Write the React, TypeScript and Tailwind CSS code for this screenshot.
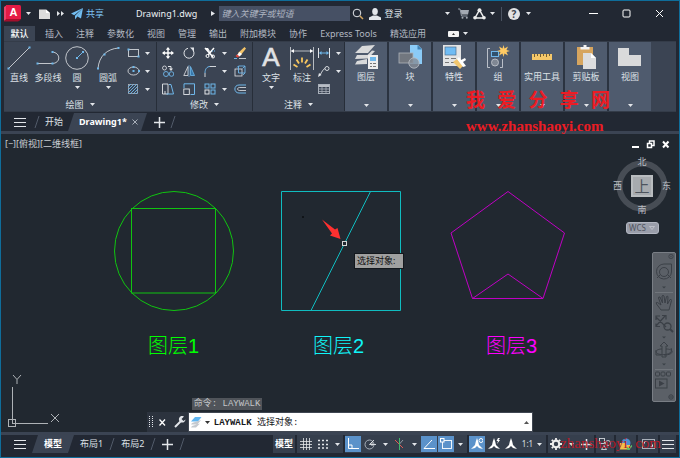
import type { ReactNode } from "react";

const BLUE = "#6fb7ea";
const LIGHT = "#e3e6ea";
const GREY = "#a9b0ba";

const TABS = ["插入", "注释", "参数化", "视图", "管理", "输出", "附加模块", "协作", "Express Tools", "精选应用"];

type DrawingProps = { w: number; h: number; children: ReactNode; className?: string };

function Drawing({ w, h, children, className = "" }: DrawingProps) {
  return (
    <svg width={w} height={h} viewBox={`0 0 ${w} ${h}`} fill="none" aria-hidden="true" className={`shrink-0 ${className}`}>
      {children}
    </svg>
  );
}

function Caret({ className = "" }: { className?: string }) {
  return (
    <Drawing w={5} h={3} className={className}>
      <path d="M0 0h5L2.500 3z" fill={LIGHT} />
    </Drawing>
  );
}

function Dots({ points }: { points: number[][] }) {
  return (
    <>
      {points.map(([x, y]) => (
        <rect key={`${x}-${y}`} x={x - 1} y={y - 1} width="2" height="2" fill={BLUE} />
      ))}
    </>
  );
}

function BigTool({ label, icon, caret, className }: { label: string; icon: ReactNode; caret?: boolean; className: string }) {
  return (
    <button type="button" className={`flex shrink-0 flex-col items-center ${className}`}>
      <span className="flex h-6 items-center">{icon}</span>
      <span className="h-4 text-[9px] leading-4 whitespace-nowrap">{label}</span>
      {caret && <Caret />}
    </button>
  );
}

function SmallTool({ label, className, children }: { label: string; className: string; children: ReactNode }) {
  return (
    <button type="button" aria-label={label} className={`flex h-[18px] items-center justify-center ${className}`}>
      {children}
    </button>
  );
}

function Panel({ title, className, children }: { title: string; className: string; children: ReactNode }) {
  return (
    <section className={`flex shrink-0 flex-col border-r border-[#272e39] ${className}`}>
      <div className="flex flex-1 items-start pt-[2px]">{children}</div>
      <button type="button" className="flex h-[13px] items-center justify-center gap-[6px] text-[9px] leading-3">
        {title}
        <Caret />
      </button>
    </section>
  );
}

const DRAW_TOOLS = [
  {
    label: "直线",
    className: "w-[30px]",
    caret: false,
    icon: (
      <Drawing w={24} h={24}>
        <path d="M1.500 22.500 22.500 1.500" stroke={LIGHT} strokeWidth="0.8" />
        <Dots points={[[1.5, 22.5], [22.5, 1.5]]} />
      </Drawing>
    ),
  },
  {
    label: "多段线",
    className: "w-[28px]",
    caret: false,
    icon: (
      <Drawing w={24} h={24}>
        <path d="M1 17.500h15c9 0 9-11 0-11.500" stroke={LIGHT} strokeWidth="0.8" />
        <Dots points={[[1.5, 17.5], [16.5, 17.5], [16.5, 6]]} />
      </Drawing>
    ),
  },
  {
    label: "圆",
    className: "w-[30px]",
    caret: true,
    icon: (
      <Drawing w={24} h={24}>
        <circle cx="12" cy="12" r="11.3" stroke={LIGHT} strokeWidth="0.8" />
        <path d="m12 12 6-6" stroke={BLUE} />
        <Dots points={[[12, 12], [18, 6]]} />
      </Drawing>
    ),
  },
  {
    label: "圆弧",
    className: "w-[32px]",
    caret: true,
    icon: (
      <Drawing w={24} h={24}>
        <path d="M2 22.500C3 10 11 3 22.500 2" stroke={LIGHT} strokeWidth="0.8" />
        <Dots points={[[2, 22.5], [8.5, 8.5], [22.5, 2]]} />
      </Drawing>
    ),
  },
];

const DRAW_SMALL = [
  {
    label: "矩形",
    icon: (
      <Drawing w={13} h={12}>
        <rect x="1.500" y="2.500" width="10" height="7" stroke={LIGHT} strokeWidth="0.8" />
        <Dots points={[[1.5, 2.5], [11.5, 9.5]]} />
      </Drawing>
    ),
  },
  {
    label: "椭圆",
    icon: (
      <Drawing w={13} h={12}>
        <ellipse cx="6.500" cy="6" rx="5.500" ry="4" stroke={LIGHT} strokeWidth="0.8" />
        <Dots points={[[6.5, 6], [12, 6], [6.5, 2]]} />
      </Drawing>
    ),
  },
  {
    label: "图案填充",
    icon: (
      <Drawing w={13} h={12}>
        <rect x="1.500" y="1.500" width="9" height="9" stroke={GREY} strokeWidth="0.8" />
        <path d="M1 4l3-3M1 7l6-6M1 10l9-9M3 11l8-8M6 11l5-5M9 11l2-2" stroke={BLUE} strokeWidth="0.9" />
      </Drawing>
    ),
  },
];

const MODIFY_ROWS = [
  [
    {
      label: "移动",
      icon: (
        <Drawing w={12} h={12}>
          <path d="M6 2v8M2 6h8" stroke="#fff" strokeWidth="1.4" />
          <path d="m6 0 2.200 2.800H3.800zM6 12l2.200-2.800H3.800zM0 6l2.800-2.200v4.400zM12 6 9.200 3.800v4.400z" fill="#fff" />
        </Drawing>
      ),
    },
    {
      label: "旋转",
      icon: (
        <Drawing w={12} h={12}>
          <path d="M10 3.200a5 5 0 1 1-5-1.900" stroke={LIGHT} />
          <path d="M7 .5h4v4z" fill={LIGHT} />
        </Drawing>
      ),
    },
    {
      label: "修剪",
      icon: (
        <Drawing w={12} h={12}>
          <path d="m1 1 8 9M10 1 4 8" stroke="#fff" strokeWidth="1.500" />
          <path d="M1 1h3l3 5z" fill="#fff" />
          <circle cx="3.500" cy="9" r="1.500" stroke="#fff" />
          <circle cx="9" cy="9.500" r="1.500" stroke="#fff" />
          <path d="M8 4h4" stroke={BLUE} strokeDasharray="1 1" />
        </Drawing>
      ),
    },
  ],
  [
    {
      label: "复制",
      icon: (
        <Drawing w={12} h={12}>
          <circle cx="2.500" cy="3" r="2" stroke={LIGHT} strokeWidth="0.8" />
          <circle cx="4" cy="9" r="2.500" stroke={BLUE} strokeWidth="0.9" />
          <circle cx="9.500" cy="9" r="2.300" stroke={BLUE} strokeWidth="0.9" />
          <path d="M6 1.500h3V4" stroke={LIGHT} />
          <path d="M7 3.500h4L9 6z" fill={LIGHT} />
        </Drawing>
      ),
    },
    {
      label: "镜像",
      icon: (
        <Drawing w={12} h={12}>
          <path d="M5 1.500v9H.800z" stroke={LIGHT} strokeWidth="0.8" />
          <path d="M7.500 1.500v9h4z" fill="#3878ab" stroke={BLUE} strokeWidth="0.8" />
          <path d="M6 0v12" stroke={BLUE} strokeWidth="0.6" />
        </Drawing>
      ),
    },
    {
      label: "圆角",
      icon: (
        <Drawing w={12} h={12}>
          <path d="M1 12V8M6 1.500h6" stroke={LIGHT} strokeWidth="0.9" />
          <path d="M1 8c0-4 2-6.500 5-6.500" stroke={BLUE} />
        </Drawing>
      ),
    },
  ],
  [
    {
      label: "拉伸",
      icon: (
        <Drawing w={12} h={12}>
          <path d="M6 11H.500V1h5.500v10M3 11V8" stroke={LIGHT} strokeWidth="0.9" />
          <path d="M7 1.500h2L11.500 11H4.500" stroke={BLUE} />
        </Drawing>
      ),
    },
    {
      label: "缩放",
      icon: (
        <Drawing w={12} h={12}>
          <path d="M1 5V.800h10.500V11.500H7.500" stroke={BLUE} />
          <rect x=".800" y="6" width="5.500" height="5.500" stroke={LIGHT} strokeWidth="0.9" />
        </Drawing>
      ),
    },
    {
      label: "阵列",
      icon: (
        <Drawing w={12} h={12}>
          <rect x="1" y="1" width="4" height="4" stroke={BLUE} />
          <rect x="7" y="1" width="4" height="4" stroke={BLUE} />
          <rect x="1" y="7" width="4" height="4" stroke={LIGHT} />
          <rect x="7" y="7" width="4" height="4" stroke={BLUE} />
        </Drawing>
      ),
    },
  ],
];

const MODIFY_EXTRA = [
  {
    label: "删除",
    icon: (
      <Drawing w={12} h={12}>
        <path d="M10.500 0 12 1.500 6.500 8.500 4 6z" fill="#f3c368" />
        <path d="M5.500 5 8 7 5.500 9.500 3 8z" fill="#fff" />
        <path d="M3 7.500 5.500 9.500 3.500 10.500 1.500 9z" fill="#e5473c" />
        <path d="M0 11.500h3" stroke={BLUE} />
        <path d="M5 11.500h7" stroke={LIGHT} strokeWidth="0.8" />
      </Drawing>
    ),
  },
  {
    label: "分解",
    icon: (
      <Drawing w={12} h={12}>
        <rect x="1" y="4" width="7" height="7" stroke={LIGHT} strokeWidth="0.8" />
        <path d="M3 2.500 4.500 1H11v7l-2 2M11 1 8.500 3.500M4.500 1v7H11" stroke={BLUE} strokeWidth="0.9" />
      </Drawing>
    ),
  },
  {
    label: "偏移",
    icon: (
      <Drawing w={12} h={12}>
        <path d="M12 2H5C-.500 2-.500 10 5 10h7" stroke={BLUE} />
        <path d="M12 4.500H5.500c-2.500 0-2.500 3 0 3H12" stroke={LIGHT} strokeWidth="0.8" />
      </Drawing>
    ),
  },
];

const CARDS = [
  {
    label: "图层",
    icon: (
      <Drawing w={24} h={24}>
        <path d="m8 1 13-1-7 8H1zM3 10l-2 4 13-.500L21 6l-3-.500L13.500 10zM3 16l-2 3.500 12-.500V14z" fill="#d9dadb" />
        <rect x="14" y="10" width="10" height="14" fill="#ededed" />
        <rect x="16" y="12" width="6" height="4" fill={BLUE} />
        <path d="M16 18.500h2M19 18.500h3M16 21.500h2M19 21.500h3" stroke="#777" />
      </Drawing>
    ),
  },
  {
    label: "块",
    icon: (
      <Drawing w={24} h={24}>
        <path d="M12 0h8l4 4v15H12z" fill="#8bcbf7" />
        <path d="M19.500 0v4.500H24z" fill="#3f81b5" />
        <rect x="1" y="8" width="14" height="10" fill="#72777f" stroke="#aeb3ba" strokeWidth="0.8" />
        <circle cx="16" cy="18" r="5.200" fill="#858c96" fillOpacity="0.8" stroke="#b9bec5" strokeWidth="0.8" />
      </Drawing>
    ),
  },
  {
    label: "特性",
    icon: (
      <Drawing w={24} h={24}>
        <rect x="1" y="0" width="18" height="21" fill="#e3e4e5" />
        <rect x="3" y="2" width="11" height="8" fill="#70bcf4" stroke="#4d6f8f" strokeWidth="0.7" />
        <path d="M3 13.500h4M9 13.500h5M3 17.500h4M9 17.500h5" stroke="#777" />
        <path d="m11 17 4-3 6 7-3 3z" fill="#f2c66e" />
        <path d="m15 14 2-2 2 3 4-2 1 2-3 2 3 4-3 1z" fill="#fff" />
      </Drawing>
    ),
  },
  {
    label: "组",
    icon: (
      <Drawing w={24} h={24}>
        <path d="M4 3.500H1.500V22.500H4M14 22.500h2.500V14" stroke="#c6cbd2" strokeWidth="0.9" />
        <rect x="5.500" y="6.500" width="7" height="5" fill="#31516c" stroke={BLUE} />
        <circle cx="9" cy="17.500" r="3.500" fill="#7f8793" stroke="#b7bcc4" />
        <path d="m17.500 0 1 3.500L22 1.500l-1.500 3.500 3.500 1-3.500 1L22 10.500l-3.500-2-1 3.500-1-3.500-3.500 2 1.500-3.500L11 6l3.500-1L13 1.500l3.500 2z" fill="#ffcb64" />
      </Drawing>
    ),
  },
  {
    label: "实用工具",
    icon: (
      <Drawing w={24} h={24}>
        <rect x="2" y="9" width="20" height="6" fill="#f6c869" />
        <path d="M4.500 9v3M7.500 9v2M10.500 9v3M13.500 9v2M16.500 9v3M19.500 9v2" stroke="#715d35" />
      </Drawing>
    ),
  },
  {
    label: "剪贴板",
    icon: (
      <Drawing w={24} h={24}>
        <rect x="3" y="2" width="16" height="18" fill="#d6a55f" />
        <path d="M6.500 4.500V2h3V0h3v2h3v2.500z" fill="#f3f3f3" />
        <path d="M9 8h8l5 5v11H9z" fill="#dcdddf" />
        <path d="M17 8v5h5z" fill="#fff" />
      </Drawing>
    ),
  },
  {
    label: "视图",
    icon: (
      <Drawing w={24} h={24}>
        <path d="M0 3h11v7h12v11H0z" fill="#d9dadb" />
      </Drawing>
    ),
  },
];

function TitleBar() {
  return (
    <header className="flex h-[25px] items-center">
      <button type="button" aria-label="应用程序菜单" className="ml-[3px] flex items-center gap-[5px]">
        <Drawing w={17} h={17}>
          <path d="M0 2 3 0v14l-3 2z" fill="#e8436a" />
          <path d="M0 16l3-2.500h13.500V15L14 16.500H0z" fill="#a30f2c" />
          <path d="M2 0h13.500Q17 0 17 1.500V14H2z" fill="#e51b45" />
          <text x="9.500" y="11" textAnchor="middle" fill="#fff" className="font-['Liberation_Sans',sans-serif] text-[11px] font-bold">A</text>
        </Drawing>
        <Caret />
      </button>
      <button type="button" aria-label="新建" className="ml-[7px]">
        <Drawing w={13} h={12}>
          <path d="M1 1.500h7l4 3.500v6H1z" fill="#dcdcdc" />
          <path d="M8 1.500V5h4z" fill="#fff" />
        </Drawing>
      </button>
      <button type="button" aria-label="更多" className="ml-[6px]">
        <Drawing w={7} h={5}>
          <path d="M0 0l3 2.500L0 5zM4 0l3 2.500L4 5z" fill={LIGHT} />
        </Drawing>
      </button>
      <button type="button" className="ml-[7px] flex items-center gap-[3px] text-[9px] text-[#7ec4f5]">
        <Drawing w={12} h={12}>
          <path d="M12 0 0 5.500 3.200 7.200zM12 0 4 7.700V11.500L6 9zM12 0 6.500 8.500 10 10.500z" fill="#72bdf1" />
        </Drawing>
        共享
      </button>
      <span className="ml-8 text-[9px] leading-3 whitespace-nowrap text-[#edf0f3]">Drawing1.dwg</span>
      <Drawing w={4} h={5} className="ml-[14px]">
        <path d="M0 0l4 2.500L0 5z" fill={LIGHT} />
      </Drawing>
      <input
        type="search"
        aria-label="搜索"
        placeholder="键入关键字或短语"
        className="ml-1 h-[15px] w-[131px] min-w-0 bg-[#465064] px-[2px] text-[9px] italic placeholder:text-[#aeb5c1] placeholder:opacity-100"
      />
      <button type="button" aria-label="查找" className="ml-[2px]">
        <Drawing w={12} h={12}>
          <circle cx="5" cy="5" r="3.800" stroke={LIGHT} />
          <path d="m8 8 3 3" stroke="#d4a65f" strokeWidth="1.500" />
        </Drawing>
      </button>
      <button type="button" className="ml-[5px] flex items-center gap-[3px] text-[9px] whitespace-nowrap">
        <Drawing w={12} h={12}>
          <ellipse cx="6" cy="3.500" rx="2.800" ry="3.500" fill={LIGHT} />
          <path d="M0 12V9.500L4 7.500h4l4 2V12z" fill={LIGHT} />
        </Drawing>
        登录
      </button>
      <div className="mr-[46px] ml-auto flex shrink-0 items-center">
        <Caret />
        <button type="button" aria-label="应用商店" className="ml-2">
          <Drawing w={11} h={11}>
            <path d="M0 1h2l1.500 7h6" stroke="#929aa6" />
            <path d="M2.500 2H11L10 6.500H3.500z" fill="#a3a9b2" />
            <circle cx="4.500" cy="9.800" r="1" fill="#a3a9b2" />
            <circle cx="8.800" cy="9.800" r="1" fill="#a3a9b2" />
          </Drawing>
        </button>
        <button type="button" aria-label="Autodesk" className="ml-1 flex items-center gap-1">
          <Drawing w={13} h={12}>
            <path d="M6.500 2 2 10h9z" stroke="#eee" strokeWidth="1.500" />
            <circle cx="6.500" cy="2.200" r="2" fill="#eee" />
            <circle cx="2" cy="9.800" r="1.800" fill="#eee" />
            <circle cx="11" cy="9.800" r="1.800" fill="#eee" />
          </Drawing>
          <Caret />
        </button>
        <span className="ml-[6px] h-[14px] w-px bg-[#4a5260]" />
        <button type="button" aria-label="帮助" className="ml-[6px] flex items-center gap-[6px]">
          <span className="flex size-3 items-center justify-center rounded-full bg-[#e2e3e4] text-[10px] leading-3 font-bold text-[#3d444f]">?</span>
          <Caret />
        </button>
      </div>
      <div className="mr-[3px] flex shrink-0">
        <button type="button" aria-label="最小化" className="flex w-[33px] justify-center">
          <Drawing w={9} h={9}>
            <path d="M0 4.500h9" stroke="#fff" />
          </Drawing>
        </button>
        <button type="button" aria-label="最大化" className="flex w-[33px] justify-center">
          <Drawing w={9} h={9}>
            <rect x="1" y="1" width="7" height="7" rx="1" stroke="#fff" />
          </Drawing>
        </button>
        <button type="button" aria-label="关闭" className="flex w-[33px] justify-center">
          <Drawing w={9} h={9}>
            <path d="m1 1 7 7M8 1 1 8" stroke="#fff" />
          </Drawing>
        </button>
      </div>
    </header>
  );
}

function Ribbon() {
  return (
    <div className="mx-[3px] flex h-[71px] border-t border-b border-[#343c49] bg-[#3b4453]">
      <Panel title="绘图" className="w-[153px]">
        <div className="flex pt-[2px]">
          {DRAW_TOOLS.map((tool) => (
            <BigTool key={tool.label} {...tool} />
          ))}
        </div>
        <div>
          {DRAW_SMALL.map((tool) => (
            <div key={tool.label} className="flex items-center">
              <SmallTool label={tool.label} className="w-[18px]">{tool.icon}</SmallTool>
              <span className="flex w-[10px] justify-center"><Caret /></span>
            </div>
          ))}
        </div>
      </Panel>
      <Panel title="修改" className="w-[96px]">
        <div>
          {MODIFY_ROWS.map((row) => (
            <div key={row[0].label} className="flex items-center">
              {row.map((tool) => (
                <SmallTool key={tool.label} label={tool.label} className="w-[21px]">{tool.icon}</SmallTool>
              ))}
              <span className="flex w-2 justify-center"><Caret /></span>
            </div>
          ))}
        </div>
        <div>
          {MODIFY_EXTRA.map((tool) => (
            <SmallTool key={tool.label} label={tool.label} className="w-6">{tool.icon}</SmallTool>
          ))}
        </div>
      </Panel>
      <Panel title="注释" className="w-[92px]">
        <div className="flex pt-[2px]">
          <BigTool
            label="文字"
            caret
            className="w-9"
            icon={
              <Drawing w={22} h={24} className="overflow-visible">
                <text x="11" y="20" textAnchor="middle" fill="#e1e2e4" stroke="#e1e2e4" strokeWidth="0.6" className="font-['Liberation_Sans',sans-serif] text-[26px]">
                  A
                </text>
              </Drawing>
            }
          />
          <BigTool
            label="标注"
            className="w-[26px]"
            icon={
              <Drawing w={24} h={24}>
                <path d="M.500 1v23M23.500 1v23M1 5h22" stroke="#c4c8ce" strokeWidth="0.9" />
                <path d="m1 5 3-2v4zM23 5l-3-2v4z" fill="#fff" />
                <path d="M12 11.500v5M6.500 13.500l2.500 4M17.500 13.500l-2.500 4M3.500 18.500l4 2.500M20.500 18.500l-4 2.500" stroke="#f8c75f" strokeWidth="1.800" />
              </Drawing>
            }
          />
        </div>
        <div>
          <div className="flex items-center">
            <SmallTool label="线性" className="w-[18px]">
              <Drawing w={12} h={12}>
                <path d="M.500 1v10M11.500 1v10" stroke={LIGHT} />
                <path d="M2 6h8" stroke={BLUE} />
                <path d="m1 6 2.500-2v4zM11 6 8.500 4v4z" fill={BLUE} />
              </Drawing>
            </SmallTool>
            <span className="flex w-[10px] justify-center"><Caret /></span>
          </div>
          <div className="flex items-center">
            <SmallTool label="引线" className="w-[18px]">
              <Drawing w={12} h={12}>
                <path d="M2 10C4 7 5 4 7 3.500" stroke={LIGHT} strokeWidth="0.9" />
                <circle cx="9" cy="3.500" r="2" stroke={LIGHT} strokeWidth="0.9" />
                <path d="m0 12 1-4 2.500 2z" fill={LIGHT} />
              </Drawing>
            </SmallTool>
            <span className="flex w-[10px] justify-center"><Caret /></span>
          </div>
          <SmallTool label="表格" className="w-[18px]">
            <Drawing w={12} h={12}>
              <rect x=".500" y="1.500" width="11" height="9" stroke={GREY} />
              <path d="M1 3h10" stroke={LIGHT} strokeWidth="1.500" />
              <path d="M1 6h10M1 8.500h10M4 4v7M8 4v7" stroke={GREY} strokeWidth="0.8" />
            </Drawing>
          </SmallTool>
        </div>
      </Panel>
      <div className="flex min-w-0 gap-[2px] bg-[#2b3340]">
        {CARDS.map((card) => (
          <button key={card.label} type="button" className="flex w-[42px] flex-col items-center bg-[#4f5b6e] pt-[3px]">
            {card.icon}
            <span className="text-[9px] leading-4 whitespace-nowrap">{card.label}</span>
            <Caret className="mt-auto mb-1" />
          </button>
        ))}
      </div>
    </div>
  );
}

function Slash() {
  return (
    <Drawing w={6} h={12}>
      <path d="M1 12 5 0" stroke="#525b69" />
    </Drawing>
  );
}

function MenuIcon() {
  return (
    <Drawing w={12} h={11}>
      <path d="M0 1.500h12M0 5.500h12M0 9.500h12" stroke={LIGHT} strokeWidth="1.200" />
    </Drawing>
  );
}

function PlusIcon() {
  return (
    <Drawing w={11} h={11}>
      <path d="M5.500 0v11M0 5.500h11" stroke={LIGHT} strokeWidth="1.500" />
    </Drawing>
  );
}

function FileTabs() {
  return (
    <nav className="flex h-[19px] items-end pl-[13px] text-[9px]">
      <div className="flex h-[18px] items-center">
        <button type="button" aria-label="图形菜单"><MenuIcon /></button>
        <span className="ml-2"><Slash /></span>
        <button type="button" className="ml-[5px]">开始</button>
        <button
          type="button"
          className="ml-[5px] flex h-[18px] w-[79px] items-center gap-[5px] bg-[#3b4453] pl-[11px] font-bold text-white [clip-path:polygon(6px_0,100%_0,calc(100%-6px)_100%,0_100%)]"
        >
          Drawing1*
          <Drawing w={6} h={6}>
            <path d="m.500.500 5 5M5.500.500l-5 5" stroke={GREY} />
          </Drawing>
        </button>
        <button type="button" aria-label="新建图形" className="ml-[7px]"><PlusIcon /></button>
        <span className="ml-[5px]"><Slash /></span>
      </div>
    </nav>
  );
}

function ViewCube() {
  return (
    <div className="absolute top-[23px] right-2 flex flex-col items-center text-[9px] leading-[10px] text-[#b9bdc2]">
      <div className="flex size-[58px] flex-col items-center justify-between">
        <svg className="absolute top-0" width="58" height="58" viewBox="0 0 58 58" fill="none" aria-hidden="true">
          <circle cx="29" cy="29" r="22.500" stroke="#474d55" strokeWidth="6" />
        </svg>
        <span className="relative">北</span>
        <div className="relative flex w-full items-center justify-between">
          <span>西</span>
          <button type="button" className="size-[22px] border-2 border-[#b9bdc0] bg-[#a7abaf] text-[15px] leading-[17px] text-[#4d545d]">上</button>
          <span>东</span>
        </div>
        <span className="relative">南</span>
      </div>
      <button type="button" className="mt-[7px] flex h-3 w-[33px] items-center justify-center gap-[3px] rounded-[3px] border border-[#b3b7c2] bg-[#9a9eaa] text-[8px] text-[#50545f]">
        WCS
        <Drawing w={6} h={4}>
          <path d="M.500.500h5L3 3.500z" stroke="#c6c9d0" strokeWidth="0.8" />
        </Drawing>
      </button>
    </div>
  );
}

function NavigationBar() {
  return (
    <div className="absolute top-[118px] right-[3px] w-[24px] rounded-[2px] border border-[#797e85] bg-[#5b6067]">
      <svg width="22" height="148" viewBox="0 0 22 148" fill="none" stroke="#3b4047" aria-label="导航栏" role="img">
        <circle cx="18" cy="3.500" r="2.200" strokeWidth="0.8" />
        <path d="m17 2.500 2 2M19 2.500l-2 2" strokeWidth="0.6" />
        <path d="M11 11h7.500v8A7.500 7.500 0 1 1 11 11z" />
        <circle cx="11" cy="19" r="4.500" />
        <path d="m7 22-3 3M15 22l3 3" />
        <path d="M9 33.500h4L11 35.500z" fill="#3b4047" stroke="none" />
        <path d="M2 39.500h18M2 116.500h18" stroke="#70757b" />
        <path d="M8 57 3.500 51q-1-2 1-1.500L8 52 5.500 45q0-1.500 1.500-1L9.500 50 9 43q1-1.500 2 0l1 7 1.500-6.500q1.500-1 1.500.500L14.500 51l2.500-4.500q1.500-.500 1.500 1L16 57z" />
        <path d="M3 64 13 74M12 63 3 73M3 67v-4h4M9 62.500h4v4M3 70.500v3h4" strokeWidth="1.200" />
        <circle cx="14.500" cy="73.500" r="3.500" strokeWidth="1.300" />
        <path d="m17 76 3 3" strokeWidth="2" />
        <path d="M9 83.500h4L11 85.500z" fill="#3b4047" stroke="none" />
        <path d="M9 93v11h4V93h2l-4-4-4 4zM18 95c4 8-14 8-15 4 0-2 3-3 6-3M13 96c9 0 8 6-2 6M3 97v5h5" />
        <path d="M9 110.500h4L11 112.500z" fill="#3b4047" stroke="none" />
        <rect x="2.500" y="119" width="4" height="4" rx="1" />
        <rect x="8" y="119" width="4" height="4" rx="1" />
        <rect x="13.500" y="119" width="4" height="4" rx="1" />
        <rect x="2.500" y="126" width="11.500" height="9" />
        <path d="m6 127.500 5.500 3-5.500 3z" fill="#3b4047" stroke="none" />
        <circle cx="18" cy="144" r="2.200" />
        <path d="M16.500 144h3" />
      </svg>
    </div>
  );
}

const LAYERS = [
  { label: "图层1", className: "left-[147px] text-[#00ff00]" },
  { label: "图层2", className: "left-[312px] text-[#10f4f8]" },
  { label: "图层3", className: "left-[485px] text-[#ff00ff]" },
];

function Canvas() {
  return (
    <main className="relative min-h-[297px] flex-1 overflow-hidden border-t-[3px] border-[#3b4453] bg-[#212830]">
      {/* model space geometry */}
      <svg className="absolute top-0 left-0" width="600" height="200" viewBox="1 134 600 200" fill="none" aria-hidden="true">
        <g stroke="#10c410">
          <circle cx="174" cy="251" r="59.500" />
          <rect x="131.500" y="208.500" width="84" height="84.500" />
        </g>
        <path d="M281.500 191.500h119v119h-119zM370.500 191.500l-59.500 119" stroke="#10bcc0" />
        <path d="m508 191.500 56.500 41.500-21.500 65.500h-70.500L451 233zM472.500 298.500 508 274l35 24.500" stroke="#c000c4" />
        <path d="M302 217h2" stroke="#000" />
        <path d="m322 219.500 13 10 2.500-1.500 3 11-10.500-3.500 2-2z" fill="#ff3030" />
        <rect x="342.500" y="241.500" width="4" height="4" fill="#212830" stroke="#d6d6d6" />
      </svg>

      <div className="absolute top-1 left-1 flex text-[9px] leading-[11px] whitespace-nowrap text-[#c9cdd2]">
        <button type="button">[−]</button>
        <button type="button">[俯视]</button>
        <button type="button">[二维线框]</button>
      </div>

      <div className="absolute top-[119px] left-[353px] border border-[#14181d] bg-[#a0a0a0] pr-2 pl-[2px] text-[9px] leading-[14px] text-[#111]">
        选择对象:
      </div>

      {LAYERS.map((layer) => (
        <span
          key={layer.label}
          className={`absolute top-[200px] font-['Liberation_Sans','Noto_Sans_CJK_SC',sans-serif] text-[20px] leading-6 font-light ${layer.className}`}
        >
          {layer.label}
        </span>
      ))}

      <div className="absolute top-[6px] right-[9px] flex gap-[6px]">
        <button type="button" aria-label="最小化图形">
          <Drawing w={9} h={9}>
            <path d="M1 7h7" stroke="#fff" strokeWidth="2" />
          </Drawing>
        </button>
        <button type="button" aria-label="还原图形">
          <Drawing w={9} h={9}>
            <path d="M3.500 3V1h4.500v4.500H6M1.500 3.500h4v4h-4z" stroke="#fff" strokeWidth="1.500" />
          </Drawing>
        </button>
        <button type="button" aria-label="关闭图形">
          <Drawing w={9} h={9}>
            <path d="m2 1.500 5.500 6M7.500 1.500l-5.500 6" stroke="#fff" strokeWidth="2" />
          </Drawing>
        </button>
      </div>

      <ViewCube />
      <NavigationBar />

      {/* UCS icon */}
      <svg className="absolute bottom-[3px] left-[6px]" width="56" height="56" viewBox="0 0 56 56" fill="none" stroke="#aeb2b6" aria-hidden="true">
        <path d="M5.500 14v36M5 50.500h36" />
        <rect x="1.500" y="46.500" width="7" height="7" />
        <path d="m6 2 4 4.500L14 2M10 6.500V11M44 41l8 8M52 41l-8 8" />
      </svg>

      <div className="absolute inset-x-0 bottom-0 flex justify-center">
        <div className="w-[57%]">
          <div className="mb-[2px] ml-[45px] w-fit bg-[#50545a] px-[2px] font-['Liberation_Mono','Noto_Sans_CJK_SC',monospace] text-[9px] leading-3 whitespace-pre text-[#c3c6c9]">
            命令: LAYWALK
          </div>
          <div className="flex h-5 bg-[#2c333e]">
            <div className="flex w-[41px] items-center gap-[6px] pl-[2px]">
              <Drawing w={4} h={12}>
                <path d="M.500 0v12M3.500 0v12" stroke={LIGHT} strokeDasharray="1 1" />
              </Drawing>
              <button type="button" aria-label="关闭命令行">
                <Drawing w={7} h={7}>
                  <path d="m.500.500 5.500 6M6 .500l-5.500 6" stroke="#fff" strokeWidth="1.300" />
                </Drawing>
              </button>
              <button type="button" aria-label="自定义" className="ml-[2px]">
                <Drawing w={12} h={12}>
                  <path d="M1 11 7.500 4.500" stroke={LIGHT} strokeWidth="2" />
                  <path d="M10 .500A3.300 3.300 0 1 0 11.500 3.500L9.500 5 7.500 3z" fill={LIGHT} />
                </Drawing>
              </button>
            </div>
            <label className="flex min-w-0 flex-1 items-center border border-[#3f4651] bg-white pl-[2px] font-['Liberation_Mono','Noto_Sans_CJK_SC',monospace] text-[9px] whitespace-nowrap text-[#16181b]">
              <Drawing w={11} h={11}>
                <path d="M4 0h6.500L7 4.500H0z" fill="#60b6f2" />
                <path d="m1 6-1 1.500h6.500L10 3M1 9l-1 1.500h5L9 6.500" fill="#c4c9cf" />
              </Drawing>
              <Drawing w={5} h={3} className="ml-[3px]">
                <path d="M0 0h5L2.500 3z" fill="#333" />
              </Drawing>
              <span className="ml-[4px] pt-[2px] leading-3">
                <b>LAYWALK</b> 选择对象:
              </span>
              <input type="text" aria-label="命令" className="min-w-0 flex-1 outline-none" />
              <Drawing w={5} h={3} className="mr-[3px]">
                <path d="M0 3h5L2.500 0z" fill="#555" />
              </Drawing>
            </label>
          </div>
        </div>
      </div>
    </main>
  );
}

function StatusGroup({ className, children }: { className: string; children: ReactNode }) {
  return <div className={`flex h-[18px] items-center bg-[#363f4d] ${className}`}>{children}</div>;
}

function StatusButton({ label, on, className, children }: { label: string; on?: boolean; className: string; children: ReactNode }) {
  return (
    <button
      type="button"
      aria-label={label}
      className={`flex h-4 shrink-0 items-center justify-center ${on ? "bg-[#5b92ca]" : ""} ${className}`}
    >
      {children}
    </button>
  );
}

function Person() {
  return <path d="M6 0 7.200 3.500 8 7l4 4-4-1-2-2-2 2-4 1 4-4 .800-3.500z" fill="#fff" />;
}

function StatusBar() {
  return (
    <footer className="flex h-[25px] items-start border-t-[3px] border-[#3b4453] bg-[#222833] pl-[13px] text-[9px]">
      <nav className="flex h-[18px] shrink-0 items-center">
        <button type="button" aria-label="布局菜单"><MenuIcon /></button>
        <button
          type="button"
          className="ml-[6px] h-[18px] w-[42px] bg-[#3b4453] font-bold text-white [clip-path:polygon(6px_0,100%_0,calc(100%-6px)_100%,0_100%)]"
        >
          模型
        </button>
        <button type="button" className="ml-[6px]">布局1</button>
        <span className="ml-[6px]"><Slash /></span>
        <button type="button" className="ml-[6px]">布局2</button>
        <span className="ml-[6px]"><Slash /></span>
        <button type="button" aria-label="新建布局" className="ml-[6px]"><PlusIcon /></button>
        <span className="ml-[6px]"><Slash /></span>
      </nav>

      <div className="mr-[3px] ml-auto flex shrink-0 items-center gap-[2px]">
        <button type="button" className="h-[18px] w-[22px] bg-[#363f4d] font-bold whitespace-nowrap text-white">模型</button>
        <StatusGroup className="w-[46px]">
          <StatusButton label="栅格" className="w-[18px]">
            <Drawing w={12} h={12}>
              <path d="M3.500 0v12M6.500 0v12M9.500 0v12M0 3.500h12M0 6.500h12M0 9.500h12" stroke={LIGHT} strokeWidth="0.8" />
            </Drawing>
          </StatusButton>
          <StatusButton label="捕捉" className="w-4">
            <Drawing w={10} h={10}>
              <path d="M0 1.500h10M0 5.500h10M0 9h10" stroke={LIGHT} strokeWidth="1.500" strokeDasharray="2 2" />
            </Drawing>
          </StatusButton>
          <StatusButton label="捕捉设置" className="w-3"><Caret /></StatusButton>
        </StatusGroup>
        <StatusGroup className="w-[122px]">
          <StatusButton label="正交" on className="w-4">
            <Drawing w={12} h={12}>
              <path d="M1.500 0v10.500H12M1.500 7h3.500v3.500" stroke="#fff" />
            </Drawing>
          </StatusButton>
          <StatusButton label="极轴" className="w-[18px]">
            <Drawing w={12} h={12}>
              <circle cx="5.500" cy="6.500" r="4.500" stroke={GREY} />
              <path d="M5.500 6.500H12M5.500 6.500 10 2M8 4v4" stroke={LIGHT} strokeWidth="0.9" />
            </Drawing>
          </StatusButton>
          <StatusButton label="极轴设置" className="w-3"><Caret /></StatusButton>
          <StatusButton label="等轴测" className="w-4">
            <Drawing w={12} h={12}>
              <path d="M6.500 6 10 2" stroke={GREY} strokeWidth="0.8" />
              <path d="m2 2 8 8" stroke="#df5a55" />
              <path d="M6.500 0v12" stroke="#3fb86b" />
            </Drawing>
          </StatusButton>
          <StatusButton label="等轴测设置" className="w-[14px]"><Caret /></StatusButton>
          <StatusButton label="对象追踪" on className="w-4">
            <Drawing w={12} h={12}>
              <path d="M1 10.500 9 2M1 10.500h11" stroke="#fff" />
            </Drawing>
          </StatusButton>
          <StatusButton label="对象捕捉" on className="ml-px w-4">
            <Drawing w={12} h={12}>
              <rect x="2.500" y="2.500" width="9" height="8" stroke="#fff" strokeWidth="0.9" />
              <rect x=".500" y=".500" width="3.500" height="3.500" fill="#5b92ca" stroke="#fff" />
            </Drawing>
          </StatusButton>
          <StatusButton label="对象捕捉设置" className="w-3"><Caret /></StatusButton>
        </StatusGroup>
        <StatusGroup className="w-[77px]">
          <StatusButton label="注释可见性" on className="w-4">
            <Drawing w={12} h={12}>
              <Person />
              <circle cx="10" cy="2.500" r="2" fill="#5b92ca" stroke="#fff" />
            </Drawing>
          </StatusButton>
          <StatusButton label="自动缩放" className="w-[18px]">
            <Drawing w={12} h={12}>
              <Person />
              <path d="M10 0 8.500 3h1.500L9 6l3-4h-1.500L12 0z" fill="#fff" />
            </Drawing>
          </StatusButton>
          <StatusButton label="注释比例" className="w-4">
            <Drawing w={12} h={12}>
              <Person />
            </Drawing>
          </StatusButton>
          <button type="button" className="flex w-[26px] items-center justify-center gap-1 text-[8px] whitespace-nowrap">
            1:1
            <Caret />
          </button>
        </StatusGroup>
        <StatusGroup className="w-[46px]">
          <StatusButton label="切换工作空间" className="w-4">
            <Drawing w={12} h={12}>
              <circle cx="6" cy="6" r="3.300" stroke="#eee" strokeWidth="2.200" />
              <path d="M6 0v2M6 10v2M0 6h2M10 6h2M1.800 1.800l1.400 1.400M8.800 8.800l1.400 1.400M10.200 1.800 8.800 3.200M3.200 8.800l-1.400 1.400" stroke="#eee" strokeWidth="1.800" />
            </Drawing>
          </StatusButton>
          <StatusButton label="工作空间列表" className="w-[14px]"><Caret /></StatusButton>
          <StatusButton label="注释监视器" className="w-4"><PlusIcon /></StatusButton>
        </StatusGroup>
        <StatusGroup className="w-[18px] justify-center">
          <StatusButton label="隔离对象" className="w-4">
            <Drawing w={12} h={12}>
              <rect x=".500" y=".500" width="5" height="5" stroke={LIGHT} strokeWidth="0.8" />
              <circle cx="9" cy="5" r="2.500" stroke={LIGHT} strokeWidth="0.8" />
              <path d="m5 7.500 2.500 4h-5z" stroke={LIGHT} strokeWidth="0.8" />
            </Drawing>
          </StatusButton>
        </StatusGroup>
        <StatusGroup className="w-[20px] justify-center">
          <StatusButton label="图形性能" className="w-4">
            <Drawing w={12} h={12}>
              <circle cx="6" cy="5" r="4.500" fill="#4b8fce" />
              <path d="M0 5h5l1 2h4v4.500H0z" fill="#f0c04d" />
              <path d="m6.500 9 2 2.500 3.500-4" stroke="#52c469" strokeWidth="1.500" />
            </Drawing>
          </StatusButton>
        </StatusGroup>
        <StatusGroup className="w-[20px] justify-center">
          <StatusButton label="全屏显示" className="w-4">
            <Drawing w={13} h={10}>
              <rect x=".500" y=".500" width="12" height="9" stroke={GREY} />
              <path d="M2.500 4.500v-2h2M10.500 5.500v2h-2" stroke={LIGHT} />
            </Drawing>
          </StatusButton>
        </StatusGroup>
        <StatusGroup className="w-[16px] justify-center">
          <StatusButton label="自定义状态栏" className="w-4"><MenuIcon /></StatusButton>
        </StatusGroup>
      </div>
    </footer>
  );
}

export default function App() {
  return (
    <div className="relative flex min-h-screen flex-col border border-[#0f6d9a] bg-[#222833] font-['Noto_Sans','Noto_Sans_CJK_SC',sans-serif] text-[#dde1e6]">
      <TitleBar />
      <nav className="flex h-[15px] items-center pl-[3px] text-[9px] leading-[15px] whitespace-nowrap text-[#b3b9c2]">
        <button type="button" className="mr-[10px] h-[15px] w-[31px] bg-[#3b4453] font-medium text-white">默认</button>
        {TABS.map((tab) => (
          <button key={tab} type="button" className="mr-[13px]">{tab}</button>
        ))}
        <button type="button" aria-label="最小化功能区" className="ml-[9px] flex items-center gap-1">
          <Drawing w={11} h={6}>
            <rect width="11" height="6" rx="1" fill="#f3f3f3" />
            <path d="M4 4h3L5.500 2z" fill="#333" />
          </Drawing>
          <Caret />
        </button>
      </nav>
      <Ribbon />
      <FileTabs />
      <Canvas />
      <StatusBar />

      <div className="pointer-events-none absolute top-[86px] left-[465px] w-[144px] text-[#ec1c24]">
        <div className="flex justify-between font-['Noto_Sans_CJK_SC',sans-serif] text-[19px] leading-6 font-bold">
          {["我", "爱", "分", "享", "网"].map((char) => (
            <span key={char}>{char}</span>
          ))}
        </div>
        <div className="mt-[5px] font-['Liberation_Serif',serif] text-[15px] leading-5 font-bold">www.zhanshaoyi.com</div>
      </div>
      <div className="pointer-events-none absolute right-[18px] bottom-[6px] font-['Liberation_Serif',serif] text-[15px] leading-4 text-[#b51c2a]">
        zhanshaoyi. com
      </div>
    </div>
  );
}
